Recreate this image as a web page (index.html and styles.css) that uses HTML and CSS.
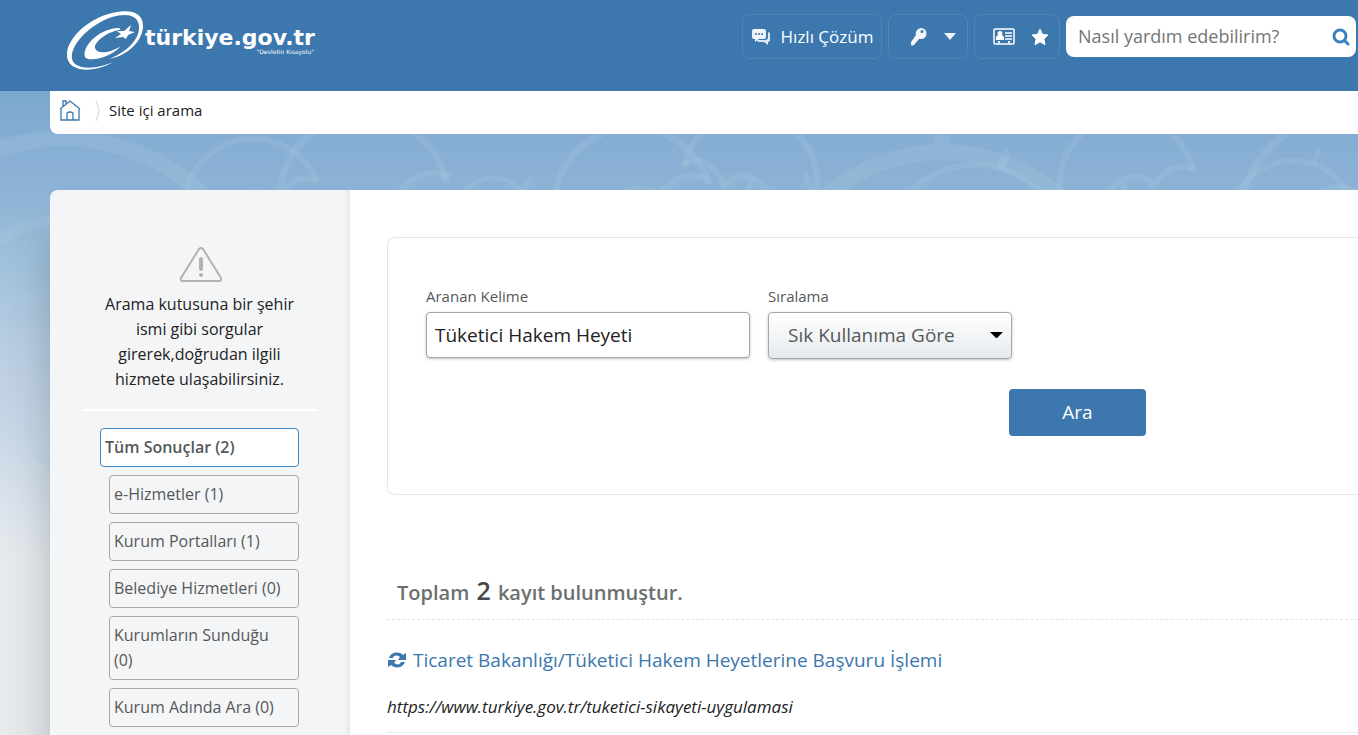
FILE: index.html
```html
<!DOCTYPE html>
<html lang="tr">
<head>
<meta charset="utf-8">
<meta name="viewport" content="width=device-width, initial-scale=1">
<title>Site içi arama</title>
<link rel="stylesheet" href="styles.css">
</head>
<body>
<svg class="backdrop" viewBox="0 0 1358 735" preserveAspectRatio="xMinYMin slice" aria-hidden="true">
  <g fill="none" stroke="#b4d2e6" stroke-opacity=".18">
    <path d="M-10 152 A202 202 0 0 1 210 202" stroke-width="16"/>
    <path d="M-5 242 Q25 222 56 221" stroke-width="11"/>
    <path d="M-5 313 Q25 294 56 292" stroke-width="11"/>
    <path d="M-10 305 Q4 318 8 338 Q20 322 54 318" stroke-width="9"/>
    <path d="M54 350 C24 390 14 450 54 465" stroke-width="8"/>
    <path d="M186 192 A69 69 0 0 1 317 181" stroke-width="6"/>
    <path d="M284 190 Q296 174 318 180" stroke-width="6"/>
    <path d="M280 192 A84 84 0 0 1 446 182" stroke-width="7"/>
    <path d="M400 192 Q420 166 450 176" stroke-width="6"/>
    <circle cx="258" cy="213" r="21" stroke-width="6"/>
    <circle cx="493" cy="215" r="37" stroke-width="5"/>
    <path d="M524 190 L530 180" stroke-width="5" stroke-linecap="round"/>
    <path d="M555 196 A79 79 0 0 1 709 184" stroke-width="7"/>
    <path d="M684 166 A67 67 0 0 1 815 196" stroke-width="7"/>
    <path d="M682 166 Q697 156 711 166 Q722 175 724 190" stroke-width="6"/>
    <path d="M662 192 Q682 168 709 180" stroke-width="7"/>
    <path d="M724 186 Q745 163 769 192" stroke-width="7"/>
    <circle cx="638" cy="214" r="26" stroke-width="5"/>
    <path d="M748 190 L752 180 M806 176 L811 190" stroke-width="6" stroke-linecap="round"/>
    <circle cx="943" cy="329" r="177" stroke-width="16"/>
    <circle cx="975" cy="256" r="91" stroke-width="6"/>
    <path d="M942 120 V144" stroke-width="16"/>
    <path d="M1006 153 L1002 165" stroke-width="8" stroke-linecap="round"/>
    <path d="M1061 196 A67 67 0 0 1 1193 172" stroke-width="6"/>
    <path d="M1153 188 Q1166 162 1194 168" stroke-width="6"/>
    <path d="M1108 192 Q1132 166 1153 184 M1123 184 L1127 192" stroke-width="6"/>
    <path d="M1243 192 Q1258 152 1290 130" stroke-width="8"/>
    <circle cx="1293" cy="225" r="64" stroke-width="6"/>
    <path d="M1319 150 L1315 162" stroke-width="5" stroke-linecap="round"/>
    <circle cx="1340" cy="212" r="25" stroke-width="6"/>
  </g>
</svg>

<header class="header">
  <a class="logo" href="#" aria-label="türkiye.gov.tr">
    <svg width="250" height="64" viewBox="0 0 250 64" aria-hidden="true">
      <g fill="#fff">
        <path d="M46 52 C30 62 3 64 0 47 C-2 30 20 9 45 3 C63 -1 76 2 76 16 C76 31 60 46 42 49 C60 42 73 29 72 16 C71 4 58 3 45 7 C22 15 3 35 5 49 C8 61 31 59 46 52 Z"/>
        <path d="M18 47 C15 37 30 20 50 18 C53 18 55 19 52 20 C40 22 27 32 28 38 C30 45 43 43 54 36 C42 49 21 52 18 47 Z"/>
        <path d="M64 15 L62 21 L68 22 L61 25 L59 29 L56 27 L48 28 L54 24 L50 21 L57 21 Z"/>
      </g>
      <text class="logo-name" x="78" y="35">türkiye.gov.tr</text>
      <text class="logo-motto" x="247" y="44" text-anchor="end">"Devletin Kısayolu"</text>
    </svg>
  </a>
  <div class="actions">
    <button class="action action-quick" type="button">
      <svg width="20" height="18" viewBox="0 0 20 18" aria-hidden="true">
        <path fill="#dce7f2" d="M17 4 Q19 4 19 6 V12 Q19 14 17 14 L17 17 L13 14 H8 Q6 14 6 12 H14 Q17 12 17 9 Z"/>
        <path fill="#eef4fa" d="M3 1 H13 Q15 1 15 3 V9 Q15 11 13 11 H8 L4 14 L4 11 H3 Q1 11 1 9 V3 Q1 1 3 1 Z"/>
        <path stroke="#3c77ae" stroke-width="1.500" d="M4 6 H6 M7 6 H9 M10 6 H12"/>
      </svg>
      <span>Hızlı Çözüm</span>
    </button>
    <button class="action action-login" type="button" aria-label="Giriş">
      <svg width="18" height="20" viewBox="0 0 18 20" aria-hidden="true">
        <path fill="#f1f6fb" fill-rule="evenodd" d="M11 1 A5.500 5.500 0 0 1 11 12 L9 12 L4 18 Q1 20 1 17 L1 15 L6 8 A5.500 5.500 0 0 1 11 1 Z M12 3 A1.500 1.500 0 1 0 12 6 A1.500 1.500 0 1 0 12 3 Z"/>
      </svg>
      <svg width="12" height="7" viewBox="0 0 12 7" aria-hidden="true"><path fill="#f1f6fb" d="M0 0 H12 L6 7 Z"/></svg>
    </button>
    <button class="action action-profile" type="button" aria-label="Profil ve favoriler">
      <svg width="22" height="17" viewBox="0 0 22 17" aria-hidden="true">
        <rect x="1" y="1" width="20" height="15" rx="1" fill="none" stroke="#fff" stroke-width="1.500"/>
        <path fill="#fff" d="M7 3 A2.500 2.500 0 0 1 9 7 L11 9 V12 H3 V9 L5 7 A2.500 2.500 0 0 1 7 3 Z M5 13 H7 V15 H5 Z M15 13 H17 V15 H15 Z"/>
        <path stroke="#fff" stroke-width="1.500" d="M12 5 H19 M12 8 H19 M12 11 H19"/>
      </svg>
      <svg width="18" height="18" viewBox="0 0 18 18" aria-hidden="true"><path fill="#fff" stroke="#fff" stroke-linejoin="round" d="M9 1 L11.400 6.300 L17 7 L12.900 10.900 L14 16.700 L9 13.800 L4 16.700 L5.100 10.900 L1 7 L6.600 6.300 Z"/></svg>
    </button>
    <form class="search" role="search">
      <input class="search-input" type="search" placeholder="Nasıl yardım edebilirim?" aria-label="Nasıl yardım edebilirim?">
      <button class="search-button" type="button" aria-label="Ara">
        <svg width="18" height="18" viewBox="0 0 18 18" aria-hidden="true"><circle cx="8" cy="8" r="6" fill="none" stroke="#3c82c0" stroke-width="3"/><path stroke="#3c82c0" stroke-width="3" stroke-linecap="round" d="M12.500 12.500 L16 16"/></svg>
      </button>
    </form>
  </div>
</header>

<div class="page">
  <nav class="breadcrumb" aria-label="Sayfa yolu">
    <a class="home" href="#" aria-label="Ana sayfa">
      <svg width="22" height="22" viewBox="0 0 22 22" fill="none" stroke="#3c77ae" stroke-width="1.300" aria-hidden="true"><path d="M2 9 V20 H20 V9 M1 9 L11 1 L21 9 M4 6 V1 H7 V4 M8 20 V14 Q8 12 11 12 Q14 12 14 14 V20"/></svg>
    </a>
    <svg class="separator" width="6" height="22" viewBox="0 0 6 22" fill="none" stroke="#d2d6d9" aria-hidden="true"><path d="M1 1 L4 9 V12 L1 21"/></svg>
    <span>Site içi arama</span>
  </nav>

  <div class="content">
    <aside class="sidebar">
      <svg class="warning" width="44" height="38" viewBox="0 0 44 38" aria-hidden="true">
        <path fill="none" stroke="#b0b2b4" stroke-width="2" stroke-linejoin="round" d="M21 3 Q23 1 25 3 L43 32 Q44 35 41 35 H5 Q2 35 3 32 Z"/>
        <path stroke="#b0b2b4" stroke-width="4" stroke-linecap="round" d="M23 13 V23 M23 29 V29"/>
      </svg>
      <p class="hint">Arama kutusuna bir şehir ismi gibi sorgular girerek,doğrudan ilgili hizmete ulaşabilirsiniz.</p>
      <ul class="filters">
        <li><a class="filter filter-active" href="#">Tüm Sonuçlar (2)</a></li>
        <li><a class="filter" href="#">e-Hizmetler (1)</a></li>
        <li><a class="filter" href="#">Kurum Portalları (1)</a></li>
        <li><a class="filter" href="#">Belediye Hizmetleri (0)</a></li>
        <li><a class="filter" href="#">Kurumların Sunduğu (0)</a></li>
        <li><a class="filter" href="#">Kurum Adında Ara (0)</a></li>
      </ul>
    </aside>

    <main class="main">
      <form class="query">
        <div class="fields">
          <div class="field field-word">
            <label for="word">Aranan Kelime</label>
            <input class="control" id="word" type="text" value="Tüketici Hakem Heyeti">
          </div>
          <div class="field field-sort">
            <label for="sort">Sıralama</label>
            <div class="select-wrap">
              <select class="control" id="sort"><option>Sık Kullanıma Göre</option></select>
              <svg class="select-arrow" width="13" height="7" viewBox="0 0 13 7" aria-hidden="true"><path d="M0 0 H13 L7 6 H6 Z"/></svg>
            </div>
          </div>
        </div>
        <button class="submit" type="button">Ara</button>
      </form>

      <h2 class="summary">Toplam <strong>2</strong> kayıt bulunmuştur.</h2>

      <article class="result">
        <a class="result-link" href="#">
          <svg width="20" height="16" viewBox="0 0 20 16" aria-hidden="true"><path fill="#3c77ae" d="M2 6 C4 0 12 -1 16 3 L19 1 V8 H11 L13 5 C10 3 7 3 6 6 Z M18 10 C16 16 8 17 4 13 L1 15 V8 H9 L7 11 C10 13 13 13 14 10 Z"/></svg>
          <span>Ticaret Bakanlığı/Tüketici Hakem Heyetlerine Başvuru İşlemi</span>
        </a>
        <cite class="result-url">https://www.turkiye.gov.tr/tuketici-sikayeti-uygulamasi</cite>
      </article>
    </main>
  </div>
</div>
</body>
</html>
```
FILE: styles.css
```css
* {
  box-sizing: border-box;
}

body {
  margin: 0;
  min-height: 100vh;
  display: flex;
  flex-direction: column;
  position: relative;
  overflow-x: hidden;
  font: 16px/25px "Open Sans", sans-serif;
  color: #222;
  background: linear-gradient(#7aa7cf 91px, #86add3 140px, #8cb2d5 190px, #a3c3dc 270px, #b9cce2 345px, #ccdae7 450px, #dee4ed 515px, #e6eaec 560px);
}

button,
input,
select {
  font: inherit;
  color: inherit;
}

a {
  color: inherit;
  text-decoration: none;
}

svg {
  display: block;
  flex: none;
}

.backdrop {
  position: absolute;
  inset: 0;
  width: 100%;
  height: 100%;
}

.header {
  position: relative;
  display: flex;
  justify-content: space-between;
  height: 91px;
  padding: 10px 2px 0 67px;
  background: #3c77ae;
}

.logo-name {
  font: bold 22px "DejaVu Sans", sans-serif;
  fill: #fff;
}

.logo-motto {
  font: 6px "DejaVu Sans", sans-serif;
  fill: #fff;
}

.actions {
  display: flex;
  gap: 6px;
  padding-top: 4px;
}

.action {
  display: flex;
  align-items: center;
  justify-content: center;
  height: 45px;
  padding: 0;
  border: 1px solid #4a86b6;
  border-radius: 8px;
  background: none;
  color: #fff;
  font-size: 17px;
}

.action-quick {
  width: 140px;
  gap: 10px;
}

.action-login {
  width: 80px;
  gap: 16px;
  padding-left: 10px;
}

.action-profile {
  width: 86px;
  gap: 16px;
  padding-left: 8px;
}

.search {
  display: flex;
  width: 290px;
  height: 41px;
  margin-top: 2px;
  border-radius: 8px;
  background: #fff;
}

.search-input {
  flex: 1;
  min-width: 0;
  padding: 0 12px;
  border: 0;
  background: none;
  font-size: 18px;
}

.search-input::placeholder {
  color: #757575;
  opacity: 1;
}

.search-button {
  padding: 0 6px 0 0;
  border: 0;
  background: none;
}

.page {
  position: relative;
  flex: 1;
  display: flex;
  flex-direction: column;
  padding-left: 50px;
}

.breadcrumb {
  display: flex;
  align-items: center;
  height: 43px;
  padding: 0 9px 4px;
  border-radius: 0 0 0 8px;
  background: #fff;
  font-size: 15px;
}

.separator {
  margin: 0 8px 0 14px;
}

.content {
  flex: 1;
  display: flex;
  margin-top: 56px;
  border-radius: 8px 0 0 0;
  box-shadow: 0 50px 40px rgba(40, 60, 70, .3);
}

.sidebar {
  width: 300px;
  flex: none;
  padding: 56px 34px 0 33px;
  border-radius: 8px 0 0 0;
  background: linear-gradient(to right, #f4f5f7 294px, #e6e8e9);
}

.warning {
  margin: 0 auto 8px;
}

.hint {
  margin: 0;
  padding: 0 16px 17px;
  border-bottom: 2px solid #fff;
  text-align: center;
}

.filters {
  display: flex;
  flex-direction: column;
  gap: 8px;
  margin: 17px 17px 0;
  padding: 0;
  list-style: none;
}

.filter {
  display: block;
  margin-left: 9px;
  padding: 6px 12px 6px 4px;
  border: 1px solid #a4a7a9;
  border-radius: 4px;
  color: #55585a;
}

.filter-active {
  margin-left: 0;
  border-color: #3c87c6;
  background: #fff;
  font-weight: 600;
}

.main {
  flex: 1;
  min-width: 0;
  padding: 47px 0 0 37px;
  background: #fff;
}

.query {
  display: flex;
  flex-direction: column;
  height: 258px;
  padding: 46px 38px 0;
  border: 1px solid #e4e6e7;
  border-right: 0;
  border-radius: 8px 0 0 8px;
}

.fields {
  display: flex;
  gap: 18px;
}

.field label {
  display: block;
  margin-bottom: 3px;
  color: #55585a;
  font-size: 15px;
}

.field-word {
  width: 324px;
}

.field-sort {
  width: 244px;
}

.control {
  display: block;
  width: 100%;
  height: 46px;
  padding: 0 8px;
  border: 1px solid #a4a7a9;
  border-radius: 4px;
  background: #fff;
  box-shadow: 0 1px 3px rgba(0, 0, 0, .25);
  font-size: 19px;
}

.select-wrap {
  position: relative;
}

select.control {
  appearance: none;
  height: 47px;
  padding: 0 19px;
  background: linear-gradient(#fff, #e6eaed);
  color: #55585a;
}

.select-arrow {
  position: absolute;
  top: 20px;
  right: 9px;
  pointer-events: none;
}

.submit {
  width: 137px;
  height: 47px;
  margin: 30px 0 0 583px;
  border: 0;
  border-radius: 4px;
  background: #3c77ae;
  color: #fff;
  font-size: 19px;
  font-weight: 500;
}

.summary {
  margin: 78px 0 0;
  padding: 0 10px 9px;
  border-bottom: 1px dashed #e2e4e5;
  color: #6a6f70;
  font-size: 20px;
  line-height: 35px;
  font-weight: 600;
}

.summary strong {
  margin: 0 2px;
  color: #47494a;
  font-size: 25px;
  font-weight: 600;
}

.result {
  padding: 26px 0 13px;
  border-bottom: 1px solid #e8eaeb;
}

.result-link {
  display: flex;
  align-items: center;
  gap: 6px;
  margin-bottom: 20px;
  color: #3c77ae;
  font-size: 19px;
  line-height: 28px;
}

.result-url {
  display: block;
  font-size: 17px;
}
```
